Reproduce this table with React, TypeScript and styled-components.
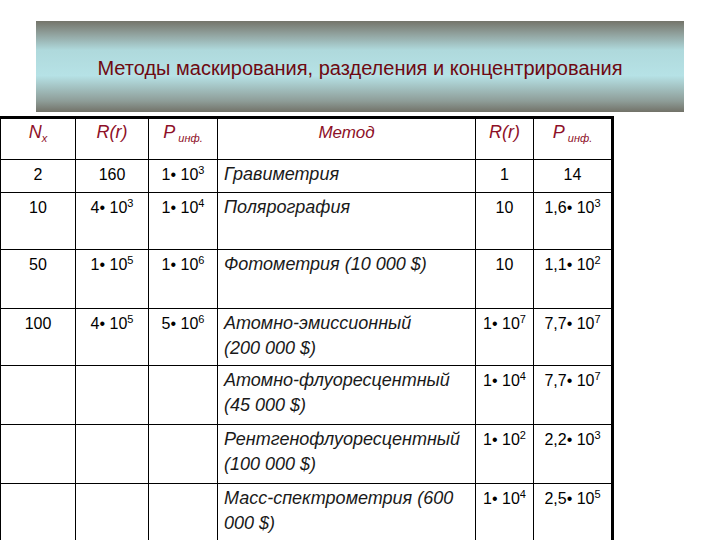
import React from "react"
import styled, { createGlobalStyle } from "styled-components"

const GlobalStyle = createGlobalStyle`
  html, body {
    margin: 0;
    padding: 0;
    background: #ffffff;
  }
  body {
    font-family: "Liberation Sans", Arial, sans-serif;
    overflow: hidden;
  }
`

const Page = styled.div`
  width: 720px;
  height: 540px;
  padding-top: 21px;
  box-sizing: border-box;
  overflow: hidden;
`

const Banner = styled.div`
  margin-left: 36px;
  width: 648px;
  height: 91px;
  display: flex;
  align-items: center;
  justify-content: center;
  background: linear-gradient(
    to bottom,
    #74746a 0%,
    #8c9a95 12%,
    #afd9dc 32%,
    #b6e2e6 60%,
    #8e9d98 88%,
    #727268 100%
  );
`

const Title = styled.h1`
  margin: 0;
  font-size: 20px;
  font-weight: normal;
  color: #6e0a12;
  white-space: nowrap;
  padding-top: 4px;
`

const Table = styled.table`
  margin-top: 4px;
  width: 613px;
  table-layout: fixed;
  border-collapse: collapse;
  border-top: 3px solid #000;
  border-right: 3px solid #000;
  border-left: 1px solid #000;
  font-size: 16px;
  color: #000;
`

const Row = styled.tr<{ $h: number }>`
  height: ${(p) => p.$h}px;
`

const HeadCell = styled.th`
  border: 1px solid #000;
  padding: 1px 4px 0;
  vertical-align: top;
  text-align: center;
  font-weight: normal;
  font-style: italic;
  font-size: 17px;
  color: #8e1028;
  line-height: 25px;
`

const Cell = styled.td<{ $method?: boolean }>`
  border: 1px solid #000;
  padding: 2px ${(p) => (p.$method ? "6px" : "2px")} 0;
  vertical-align: top;
  text-align: ${(p) => (p.$method ? "left" : "center")};
  font-style: ${(p) => (p.$method ? "italic" : "normal")};
  font-size: ${(p) => (p.$method ? "18px" : "16px")};
  color: ${(p) => (p.$method ? "#1a1a1a" : "#000")};
  line-height: 25px;
  white-space: nowrap;
`

const Sup = styled.sup`
  font-size: 11px;
  line-height: 0;
  vertical-align: 6px;
`

const Sub = styled.sub`
  font-size: 11px;
  line-height: 0;
  vertical-align: -4px;
`

const BigP = styled.span`
  font-size: 18px;
`

const cols = [75, 73, 69, 258, 58, 79]

type Num = { m: string; e?: string }

const n = (m: string, e?: string): Num => ({ m, e })

const rows: {
  h: number
  nx: string
  r1: Num | null
  p1: Num | null
  method: string[]
  r2: Num
  p2: Num
}[] = [
  { h: 33, nx: "2", r1: n("160"), p1: n("1• 10", "3"), method: ["Гравиметрия"], r2: n("1"), p2: n("14") },
  { h: 57, nx: "10", r1: n("4• 10", "3"), p1: n("1• 10", "4"), method: ["Полярография"], r2: n("10"), p2: n("1,6• 10", "3") },
  { h: 59, nx: "50", r1: n("1• 10", "5"), p1: n("1• 10", "6"), method: ["Фотометрия (10 000 $)"], r2: n("10"), p2: n("1,1• 10", "2") },
  { h: 57, nx: "100", r1: n("4• 10", "5"), p1: n("5• 10", "6"), method: ["Атомно-эмиссионный", "(200 000 $)"], r2: n("1• 10", "7"), p2: n("7,7• 10", "7") },
  { h: 59, nx: "", r1: null, p1: null, method: ["Атомно-флуоресцентный", "(45 000 $)"], r2: n("1• 10", "4"), p2: n("7,7• 10", "7") },
  { h: 59, nx: "", r1: null, p1: null, method: ["Рентгенофлуоресцентный", "(100 000 $)"], r2: n("1• 10", "2"), p2: n("2,2• 10", "3") },
  { h: 60, nx: "", r1: null, p1: null, method: ["Масс-спектрометрия (600", "000 $)"], r2: n("1• 10", "4"), p2: n("2,5• 10", "5") },
]

function Value({ v }: { v: Num | null }) {
  if (!v) return null
  return (
    <>
      {v.m}
      {v.e && <Sup>{v.e}</Sup>}
    </>
  )
}

export default function App() {
  return (
    <Page>
      <GlobalStyle />
      <Banner>
        <Title>Методы маскирования, разделения и концентрирования</Title>
      </Banner>
      <Table>
        <colgroup>
          {cols.map((w, i) => (
            <col key={i} style={{ width: w }} />
          ))}
        </colgroup>
        <thead>
          <Row $h={42}>
            <HeadCell>
              <BigP>N</BigP>
              <Sub>x</Sub>
            </HeadCell>
            <HeadCell>
              <BigP>R(r)</BigP>
            </HeadCell>
            <HeadCell>
              <BigP>P</BigP>
              <Sub> инф.</Sub>
            </HeadCell>
            <HeadCell>Метод</HeadCell>
            <HeadCell>
              <BigP>R(r)</BigP>
            </HeadCell>
            <HeadCell>
              <BigP>P</BigP>
              <Sub> инф.</Sub>
            </HeadCell>
          </Row>
        </thead>
        <tbody>
          {rows.map((r, i) => (
            <Row key={i} $h={r.h}>
              <Cell>{r.nx}</Cell>
              <Cell>
                <Value v={r.r1} />
              </Cell>
              <Cell>
                <Value v={r.p1} />
              </Cell>
              <Cell $method>
                {r.method.map((line, j) => (
                  <div key={j}>{line}</div>
                ))}
              </Cell>
              <Cell>
                <Value v={r.r2} />
              </Cell>
              <Cell>
                <Value v={r.p2} />
              </Cell>
            </Row>
          ))}
        </tbody>
      </Table>
    </Page>
  )
}
